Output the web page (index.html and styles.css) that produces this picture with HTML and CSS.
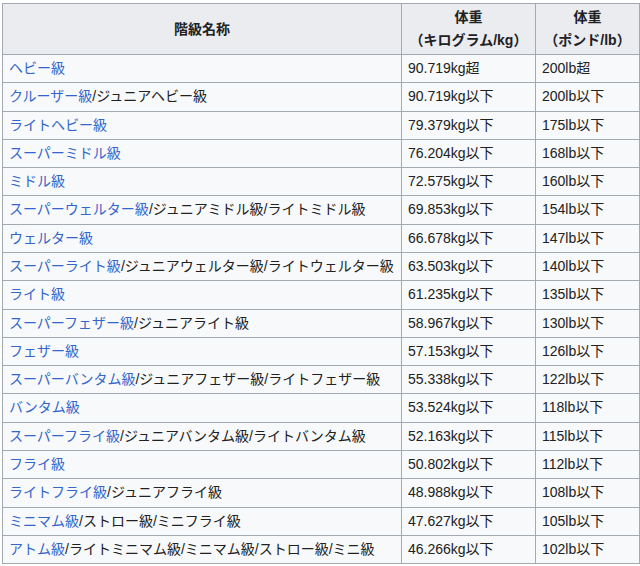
FILE: index.html
```html
<!DOCTYPE html>
<html lang="ja">
<head>
<meta charset="utf-8">
<title>階級</title>
<link rel="stylesheet" href="styles.css">
</head>
<body>
<table class="wikitable">
<colgroup><col class="c1"><col class="c2"><col class="c3"></colgroup>
<thead>
<tr><th>階級名称</th><th>体重<br>（キログラム/kg）</th><th>体重<br>（ポンド/lb）</th></tr>
</thead>
<tbody>
<tr><td><a>ヘビー級</a></td><td>90.719kg超</td><td>200lb超</td></tr>
<tr><td><a>クルーザー級</a>/ジュニアヘビー級</td><td>90.719kg以下</td><td>200lb以下</td></tr>
<tr><td><a>ライトヘビー級</a></td><td>79.379kg以下</td><td>175lb以下</td></tr>
<tr><td><a>スーパーミドル級</a></td><td>76.204kg以下</td><td>168lb以下</td></tr>
<tr><td><a>ミドル級</a></td><td>72.575kg以下</td><td>160lb以下</td></tr>
<tr><td><a>スーパーウェルター級</a>/ジュニアミドル級/ライトミドル級</td><td>69.853kg以下</td><td>154lb以下</td></tr>
<tr><td><a>ウェルター級</a></td><td>66.678kg以下</td><td>147lb以下</td></tr>
<tr><td><a>スーパーライト級</a>/ジュニアウェルター級/ライトウェルター級</td><td>63.503kg以下</td><td>140lb以下</td></tr>
<tr><td><a>ライト級</a></td><td>61.235kg以下</td><td>135lb以下</td></tr>
<tr><td><a>スーパーフェザー級</a>/ジュニアライト級</td><td>58.967kg以下</td><td>130lb以下</td></tr>
<tr><td><a>フェザー級</a></td><td>57.153kg以下</td><td>126lb以下</td></tr>
<tr><td><a>スーパーバンタム級</a>/ジュニアフェザー級/ライトフェザー級</td><td>55.338kg以下</td><td>122lb以下</td></tr>
<tr><td><a>バンタム級</a></td><td>53.524kg以下</td><td>118lb以下</td></tr>
<tr><td><a>スーパーフライ級</a>/ジュニアバンタム級/ライトバンタム級</td><td>52.163kg以下</td><td>115lb以下</td></tr>
<tr><td><a>フライ級</a></td><td>50.802kg以下</td><td>112lb以下</td></tr>
<tr><td><a>ライトフライ級</a>/ジュニアフライ級</td><td>48.988kg以下</td><td>108lb以下</td></tr>
<tr><td><a>ミニマム級</a>/ストロー級/ミニフライ級</td><td>47.627kg以下</td><td>105lb以下</td></tr>
<tr><td><a>アトム級</a>/ライトミニマム級/ミニマム級/ストロー級/ミニ級</td><td>46.266kg以下</td><td>102lb以下</td></tr>
</tbody>
</table>
</body>
</html>
```
FILE: styles.css
```css
html, body {
  margin: 0;
  padding: 0;
  background: #ffffff;
}
body {
  padding: 3px 2px;
  font-family: "Liberation Sans", "Noto Sans CJK JP", sans-serif;
  font-size: 14px;
  color: #202122;
}
.wikitable {
  border-collapse: collapse;
  table-layout: fixed;
  width: 637px;
  background: #f8f9fa;
  border: 1px solid #a2a9b1;
}
.c1 { width: 399px; }
.c2 { width: 134px; }
.c3 { width: 104px; }
.wikitable th,
.wikitable td {
  border: 1px solid #a2a9b1;
  padding: 0 6px;
  text-align: left;
  white-space: nowrap;
}
.wikitable th {
  background: #eaecf0;
  font-weight: bold;
  text-align: center;
  line-height: 23px;
  padding-top: 2px;
  padding-bottom: 2px;
}
.wikitable td {
  line-height: 27.28px;
}
.wikitable a {
  color: #3366cc;
  text-decoration: none;
}
```
